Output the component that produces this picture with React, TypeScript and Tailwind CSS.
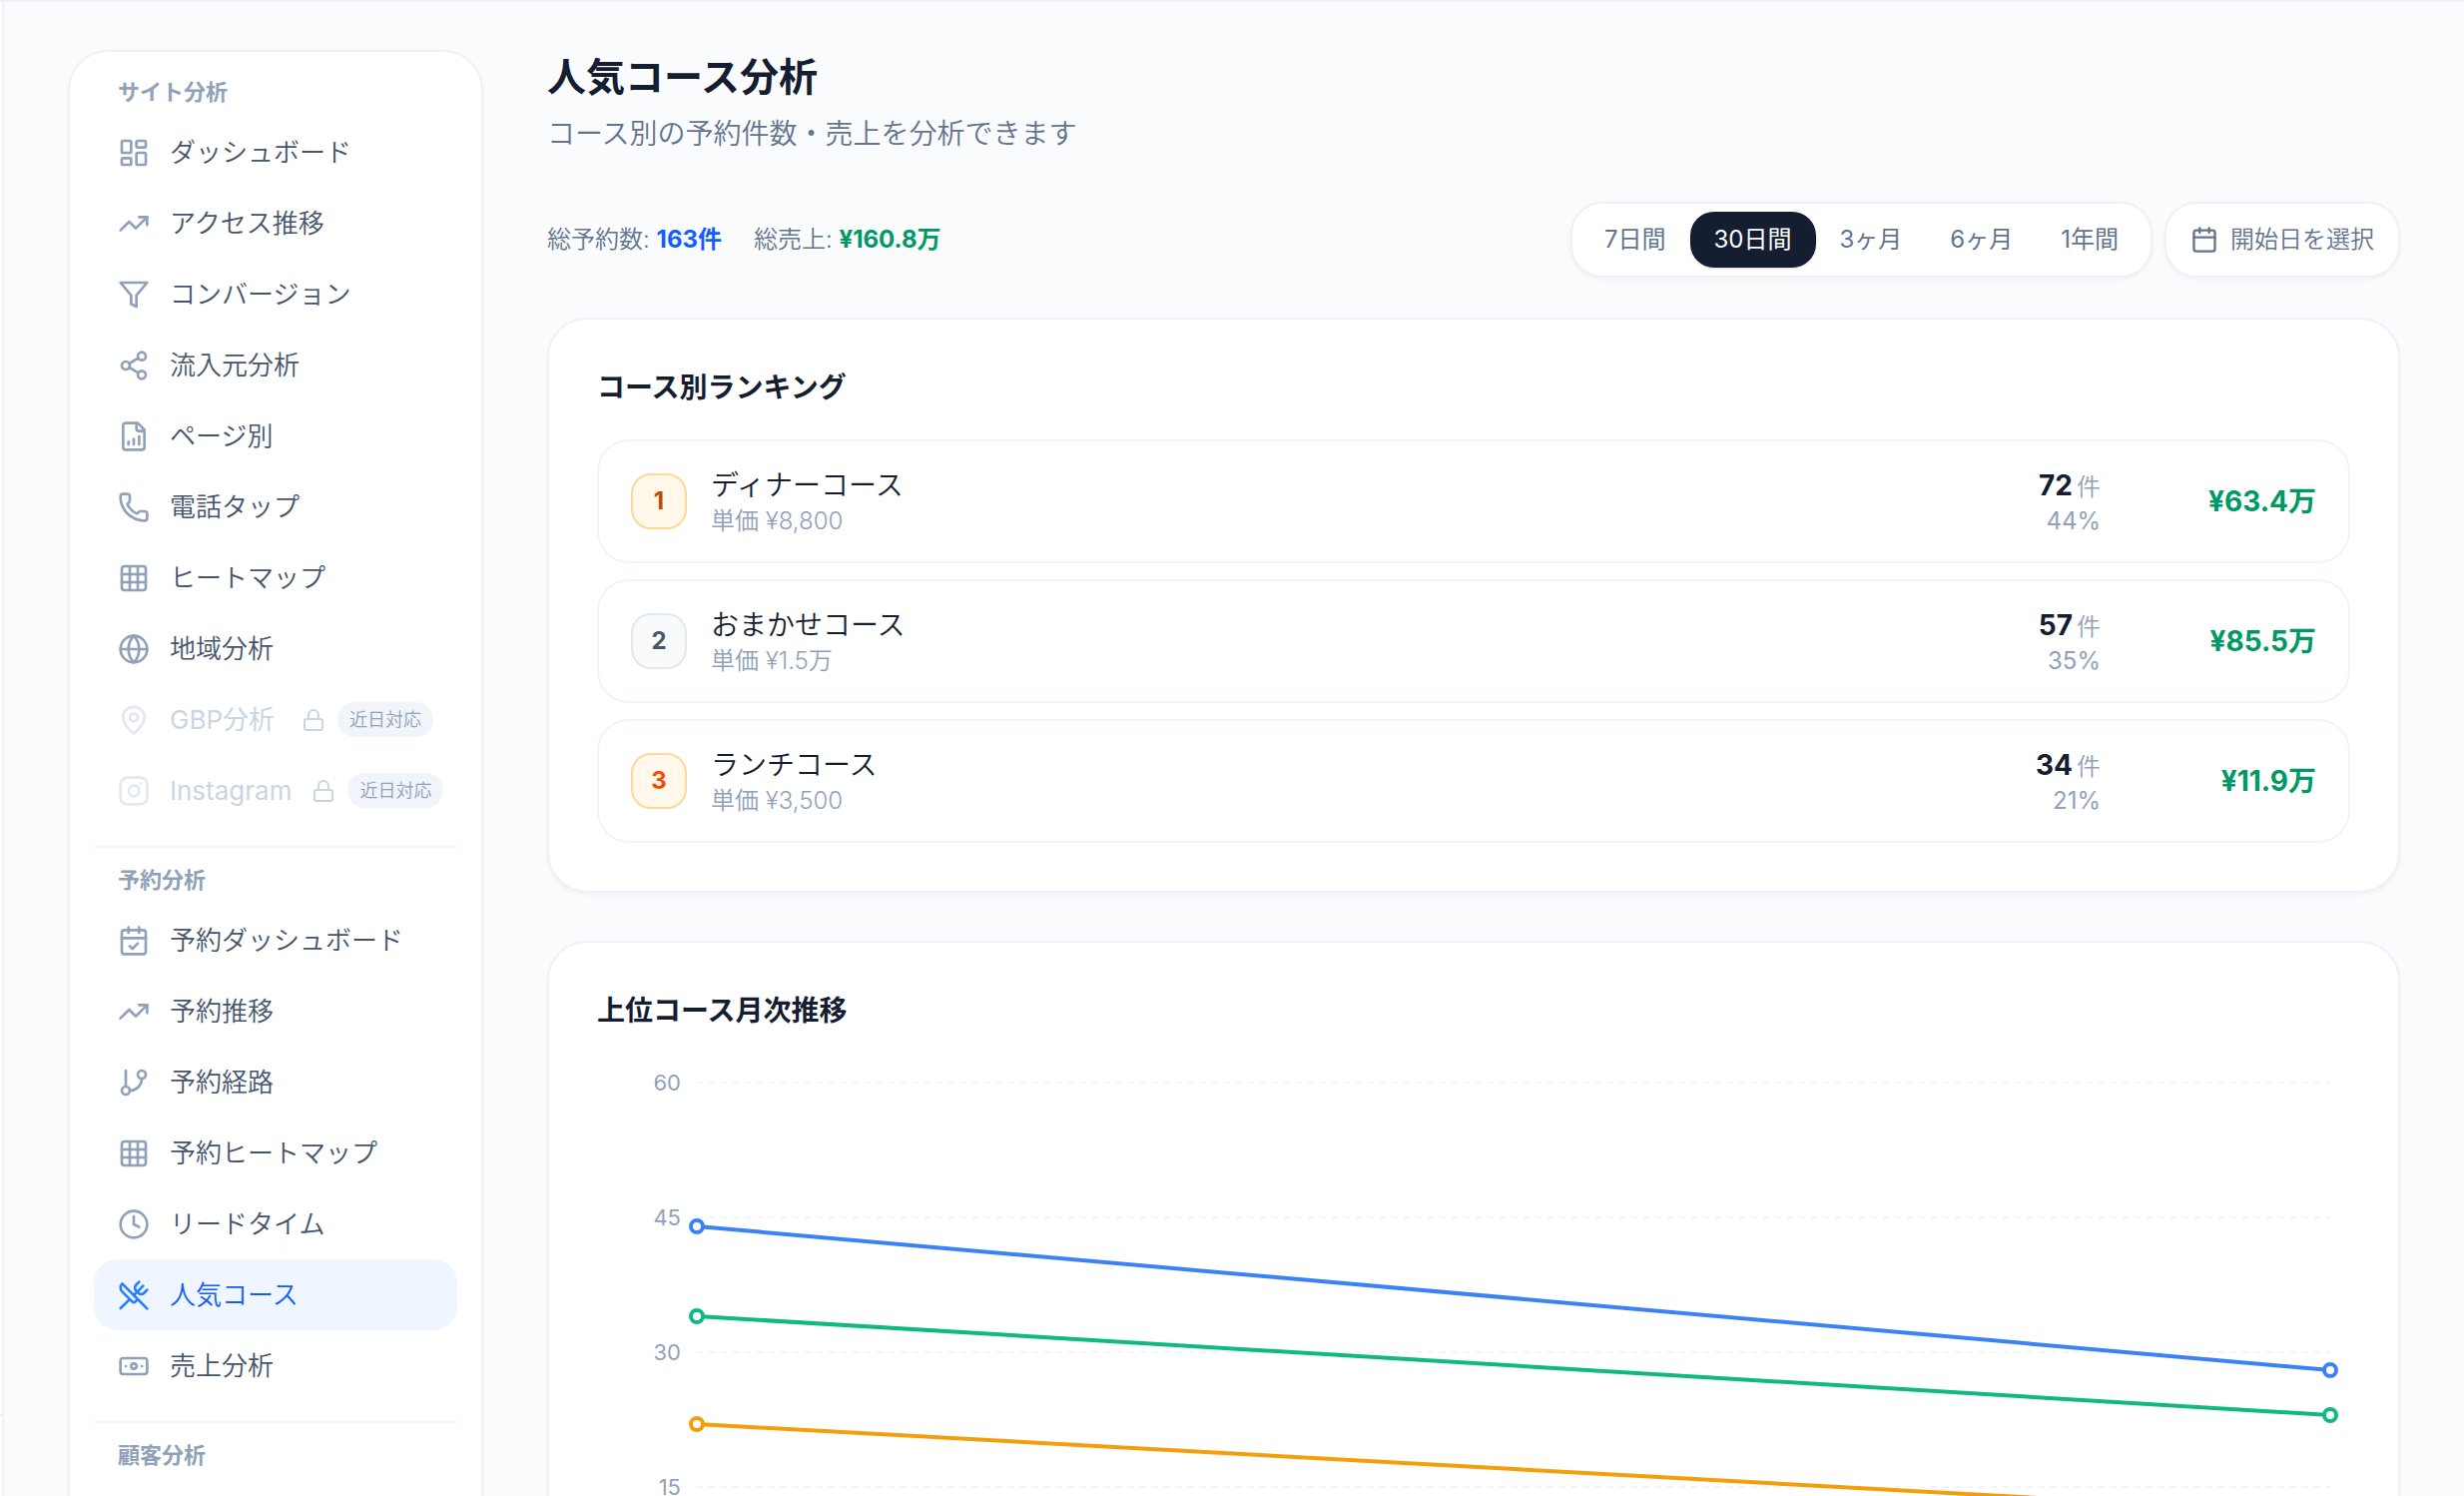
import { useState } from 'react';
import type { ComponentType } from 'react';
import {
    Banknote,
    Calendar,
    CalendarCheck,
    Clock,
    GitBranch,
    Globe,
    Grid3x3,
    Instagram,
    LayoutDashboard,
    Lock,
    MapPin,
    Phone,
    Share2,
    TrendingUp,
    UtensilsCrossed,
} from 'lucide-react';

type IconType = ComponentType<{ className?: string }>;

interface NavItem {
    label: string;
    icon: IconType;
    active?: boolean;
    comingSoon?: boolean;
}

function FunnelIcon({ className }: { className?: string }) {
    return (
        <svg
            viewBox="0 0 24 24"
            fill="none"
            stroke="currentColor"
            strokeWidth="2"
            strokeLinecap="round"
            strokeLinejoin="round"
            className={className}
        >
            <path d="M22 3H2l8 9.46V19l4 2v-8.54L22 3z" />
        </svg>
    );
}

function FileChartIcon({ className }: { className?: string }) {
    return (
        <svg
            viewBox="0 0 24 24"
            fill="none"
            stroke="currentColor"
            strokeWidth="2"
            strokeLinecap="round"
            strokeLinejoin="round"
            className={className}
        >
            <path d="M15 2H6a2 2 0 0 0-2 2v16a2 2 0 0 0 2 2h12a2 2 0 0 0 2-2V7Z" />
            <path d="M14 2v4a2 2 0 0 0 2 2h4" />
            <path d="M8 18v-2M12 18v-4M16 18v-6" />
        </svg>
    );
}

const sections: { title: string; items: NavItem[] }[] = [
    {
        title: 'サイト分析',
        items: [
            { label: 'ダッシュボード', icon: LayoutDashboard },
            { label: 'アクセス推移', icon: TrendingUp },
            { label: 'コンバージョン', icon: FunnelIcon },
            { label: '流入元分析', icon: Share2 },
            { label: 'ページ別', icon: FileChartIcon },
            { label: '電話タップ', icon: Phone },
            { label: 'ヒートマップ', icon: Grid3x3 },
            { label: '地域分析', icon: Globe },
            { label: 'GBP分析', icon: MapPin, comingSoon: true },
            { label: 'Instagram', icon: Instagram, comingSoon: true },
        ],
    },
    {
        title: '予約分析',
        items: [
            { label: '予約ダッシュボード', icon: CalendarCheck },
            { label: '予約推移', icon: TrendingUp },
            { label: '予約経路', icon: GitBranch },
            { label: '予約ヒートマップ', icon: Grid3x3 },
            { label: 'リードタイム', icon: Clock },
            { label: '人気コース', icon: UtensilsCrossed, active: true },
            { label: '売上分析', icon: Banknote },
        ],
    },
    { title: '顧客分析', items: [] },
];

const periods = ['7日間', '30日間', '3ヶ月', '6ヶ月', '1年間'];

const courses = [
    {
        name: 'ディナーコース',
        price: '¥8,800',
        count: 72,
        share: '44%',
        sales: '¥63.4万',
        badge: 'border-[#fed899] bg-[#fff8eb] text-amber-700',
    },
    {
        name: 'おまかせコース',
        price: '¥1.5万',
        count: 57,
        share: '35%',
        sales: '¥85.5万',
        badge: 'border-slate-200 bg-slate-50 text-slate-600',
    },
    {
        name: 'ランチコース',
        price: '¥3,500',
        count: 34,
        share: '21%',
        sales: '¥11.9万',
        badge: 'border-[#fed899] bg-[#fff8eb] text-orange-600',
    },
];

const series = [
    { color: '#f59e0b', from: 22, to: 12 },
    { color: '#10b981', from: 34, to: 23 },
    { color: '#3b82f6', from: 44, to: 28 },
];

const ticks = [60, 45, 30, 15, 0];

// 9px per reservation, 60 at the top of the plot
const toY = (value: number) => (60 - value) * 9;

function NavLink({ item }: { item: NavItem }) {
    const Icon = item.icon;

    if (item.comingSoon) {
        return (
            <div className="flex items-center gap-5 px-6 py-4 text-[26px] leading-[39px] text-slate-300">
                <Icon className="size-8 shrink-0 text-slate-200" />
                <span className="flex-1">{item.label}</span>
                <span className="flex shrink-0 items-center gap-3">
                    <Lock className="size-6" />
                    <span className="rounded-full bg-slate-100 px-3 py-1 text-[18px] leading-[27px] font-[350] whitespace-nowrap text-slate-400">
                        近日対応
                    </span>
                </span>
            </div>
        );
    }

    return (
        <a
            href="#"
            className={`flex items-center gap-5 rounded-3xl px-6 py-4 text-[26px] leading-[39px] font-[350] ${
                item.active ? 'bg-blue-50 text-blue-600' : 'text-slate-600'
            }`}
        >
            <Icon className={`size-8 shrink-0 ${item.active ? 'text-blue-500' : 'text-slate-400'}`} />
            <span>{item.label}</span>
        </a>
    );
}

function Sidebar() {
    return (
        <nav className="w-[416px] shrink-0 rounded-[40px] border-2 border-[#eef1f8] bg-white p-6 shadow-[0_2px_4px_rgba(15,23,42,0.03)]">
            {sections.map((section, i) => (
                <div key={section.title} className={i > 0 ? 'mt-5 border-t-2 border-slate-100 pt-4' : ''}>
                    <h2 className="px-6 pb-2 text-[22px] leading-[33px] font-semibold text-slate-400">
                        {section.title}
                    </h2>
                    {section.items.map((item) => (
                        <NavLink key={item.label} item={item} />
                    ))}
                </div>
            ))}
        </nav>
    );
}

function TrendChart() {
    return (
        <div className="mt-8 pt-5 pr-5 pb-12 pl-[100px]">
            <svg className="h-[540px] w-full overflow-visible" role="img" aria-label="上位コース月次推移">
                {ticks.map((tick) => (
                    <g key={tick}>
                        <line
                            x1="0"
                            x2="100%"
                            y1={toY(tick)}
                            y2={toY(tick)}
                            stroke="#f1f5f9"
                            strokeWidth="2"
                            strokeDasharray="6 6"
                        />
                        <text x="-16" y={toY(tick) + 8} textAnchor="end" className="fill-slate-400 text-[22px]">
                            {tick}
                        </text>
                    </g>
                ))}
                {series.map((s) => (
                    <g key={s.color} stroke={s.color}>
                        <line x1="0" x2="100%" y1={toY(s.from)} y2={toY(s.to)} strokeWidth="4" />
                        <circle cx="0" cy={toY(s.from)} r="6" fill="#fff" strokeWidth="4" />
                        <circle cx="100%" cy={toY(s.to)} r="6" fill="#fff" strokeWidth="4" />
                    </g>
                ))}
            </svg>
        </div>
    );
}

export default function App() {
    const [period, setPeriod] = useState('30日間');

    return (
        <div className="min-h-screen bg-[#fafbfd] font-['Inter','Noto_Sans_CJK_JP',sans-serif] text-[#151d31]">
            <header className="h-[2px] bg-[#eef1f8]" />
            <div className="flex">
                <aside className="sticky top-0 flex h-[calc(100vh-2px)] w-1 shrink-0 flex-col border-r-2 border-[#eef1f8] bg-white">
                    <div className="mt-auto h-[82px] border-t-2 border-[#eef1f8]" />
                </aside>

                <div className="flex min-w-0 flex-1 gap-16 px-16 py-12">
                    <Sidebar />

                    <main className="min-w-0 flex-1">
                        <h1 className="text-[39px] leading-[54px] font-semibold">人気コース分析</h1>
                        <p className="mt-2.5 text-[28px] leading-[40px] font-[350] text-slate-500">
                            コース別の予約件数・売上を分析できます
                        </p>

                        <div className="mt-12 flex items-center justify-between">
                            <div className="flex gap-8 text-[24px] leading-[36px] font-[350] text-slate-500">
                                <span>
                                    総予約数: <strong className="font-bold text-blue-600">163件</strong>
                                </span>
                                <span>
                                    総売上: <strong className="font-bold text-emerald-600">¥160.8万</strong>
                                </span>
                            </div>

                            <div className="flex gap-3 text-[24px] leading-[36px] text-slate-500">
                                <div className="flex rounded-[32px] border-2 border-[#eef1f8] bg-white p-2 shadow-[0_2px_4px_rgba(15,23,42,0.04)]">
                                    {periods.map((p) => (
                                        <button
                                            key={p}
                                            type="button"
                                            onClick={() => setPeriod(p)}
                                            className={`h-14 rounded-3xl px-6 ${
                                                p === period ? 'bg-[#151d31] text-white shadow-sm' : ''
                                            }`}
                                        >
                                            {p}
                                        </button>
                                    ))}
                                </div>
                                <button
                                    type="button"
                                    className="flex items-center gap-3 rounded-[32px] border-2 border-[#eef1f8] bg-white px-6 font-[350] shadow-[0_2px_4px_rgba(15,23,42,0.04)]"
                                >
                                    <Calendar className="size-7" />
                                    開始日を選択
                                </button>
                            </div>
                        </div>

                        <section className="mt-10 rounded-[40px] border-2 border-[#eef1f8] bg-white p-12 shadow-[0_2px_4px_rgba(15,23,42,0.04)]">
                            <h2 className="text-[28px] leading-[40px] font-semibold">コース別ランキング</h2>
                            <ol className="mt-8 space-y-4">
                                {courses.map((course, i) => (
                                    <li
                                        key={course.name}
                                        className="flex items-center rounded-[32px] border-2 border-slate-100 px-8 py-6"
                                    >
                                        <span
                                            className={`flex size-14 items-center justify-center rounded-[20px] border-2 text-[24px] font-bold ${course.badge}`}
                                        >
                                            {i + 1}
                                        </span>
                                        <div className="ml-6 flex-1">
                                            <p className="text-[28px] leading-[40px] font-[350]">{course.name}</p>
                                            <p className="text-[24px] leading-[32px] font-[350] text-slate-400">
                                                単価 {course.price}
                                            </p>
                                        </div>
                                        <div className="text-right">
                                            <p className="text-[28px] leading-[40px] font-bold">
                                                {course.count}
                                                <span className="ml-1 text-[24px] leading-none font-[350] text-slate-400">
                                                    件
                                                </span>
                                            </p>
                                            <p className="text-[24px] leading-[32px] text-slate-400">{course.share}</p>
                                        </div>
                                        <p className="w-[216px] text-right text-[28px] leading-[40px] font-bold text-emerald-600">
                                            {course.sales}
                                        </p>
                                    </li>
                                ))}
                            </ol>
                        </section>

                        <section className="mt-12 rounded-[40px] border-2 border-[#eef1f8] bg-white p-12 shadow-[0_2px_4px_rgba(15,23,42,0.04)]">
                            <h2 className="text-[28px] leading-[40px] font-semibold">上位コース月次推移</h2>
                            <TrendChart />
                        </section>
                    </main>
                </div>
            </div>
        </div>
    );
}
